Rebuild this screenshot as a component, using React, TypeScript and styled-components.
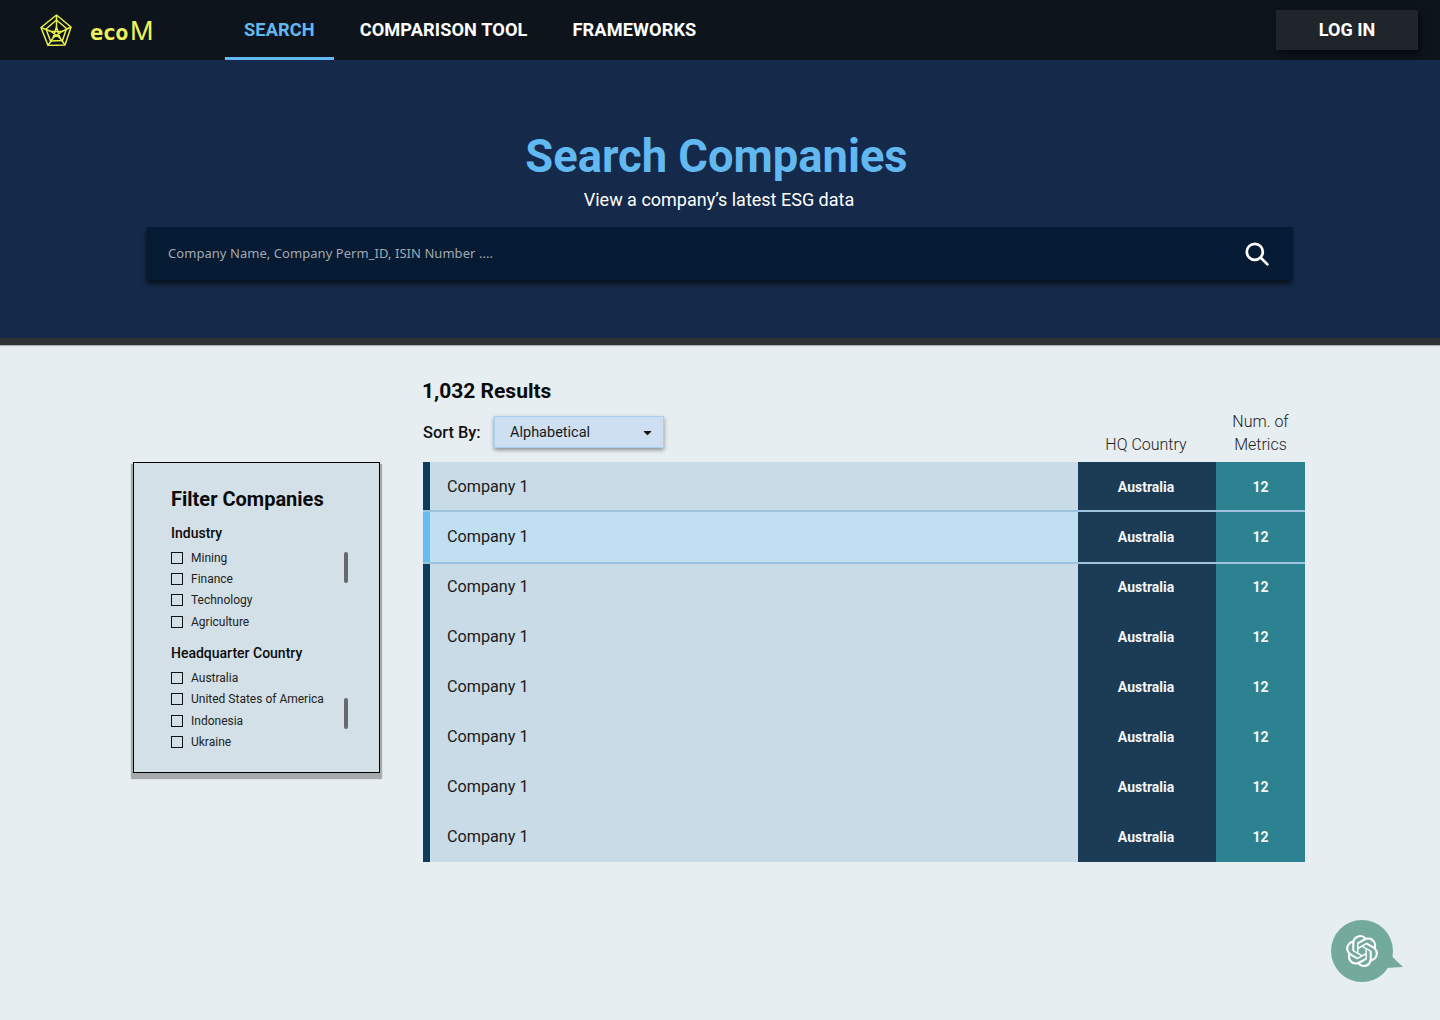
import styled, { createGlobalStyle } from 'styled-components';
import { FaCaretDown } from 'react-icons/fa';
import { SiOpenai } from 'react-icons/si';

const GlobalStyle = createGlobalStyle`
  html, body {
    margin: 0;
    padding: 0;
    background: #e6eef1;
    font-family: "Roboto", "Liberation Sans", sans-serif;
  }
  * { box-sizing: border-box; }
`;

const INDUSTRIES = ['Mining', 'Finance', 'Technology', 'Agriculture'];
const COUNTRIES = ['Australia', 'United States of America', 'Indonesia', 'Ukraine'];
const ROWS = [0, 1, 2, 3, 4, 5, 6, 7];

function Logo() {
  return (
    <svg width="32" height="32" viewBox="0 0 32 32" fill="none" stroke="#e8f04a" strokeWidth="1.5" strokeLinejoin="round">
      <polygon points="16.5,1 31,13 25,31 8,31.5 1,13.5" />
      <polygon points="16.5,6 26.5,14.5 22.5,26.5 10.5,27 6,15" />
      <polygon points="16.5,13 20,24 11,17.5 22,17.5 13,24" />
      <path d="M16.5 1V13M31 13L22 17.5M25 31L20 24M8 31.5L13 24M1 13.5L11 17.5" />
    </svg>
  );
}

function SearchIcon() {
  return (
    <svg width="24" height="24" viewBox="0 0 24 24" fill="none" stroke="#ffffff" strokeWidth="2.7" strokeLinecap="round">
      <circle cx="9.8" cy="9.8" r="8" />
      <line x1="15.8" y1="15.8" x2="22.4" y2="22.4" />
    </svg>
  );
}

function FilterGroup({ title, items, thumbTop }: { title: string; items: string[]; thumbTop: number }) {
  return (
    <Group>
      <GroupTitle>{title}</GroupTitle>
      {items.map((item) => (
        <CheckRow key={item}>
          <CheckBox />
          {item}
        </CheckRow>
      ))}
      <ScrollThumb $top={thumbTop} />
    </Group>
  );
}

function App() {
  return (
    <Page>
      <GlobalStyle />
      <Header>
        <Brand>
          <Logo />
          <BrandName>eco<BrandM>M</BrandM></BrandName>
        </Brand>
        <Nav>
          <NavTab $active>SEARCH</NavTab>
          <NavTab>COMPARISON TOOL</NavTab>
          <NavTab>FRAMEWORKS</NavTab>
        </Nav>
        <LoginButton>LOG IN</LoginButton>
      </Header>

      <Hero>
        <HeroTitle>Search Companies</HeroTitle>
        <HeroSub>View a company’s latest ESG data</HeroSub>
        <SearchBar>
          <Placeholder>Company Name, Company Perm_ID, ISIN Number ....</Placeholder>
          <SearchIcon />
        </SearchBar>
      </Hero>

      <Main>
        <Spacer />
        <ResultsHead>
          <ResultsTitle>1,032 Results</ResultsTitle>
          <Toolbar>
            <SortArea>
              <SortLabel>Sort By:</SortLabel>
              <SortSelect>
                Alphabetical
                <FaCaretDown size={13} color="#111" />
              </SortSelect>
            </SortArea>
            <ColumnLabel $shift={2}>HQ Country</ColumnLabel>
            <ColumnLabel>Num. of<br />Metrics</ColumnLabel>
          </Toolbar>
        </ResultsHead>

        <FilterPanel>
          <FilterTitle>Filter Companies</FilterTitle>
          <FilterGroup title="Industry" items={INDUSTRIES} thumbTop={29} />
          <FilterGroup title="Headquarter Country" items={COUNTRIES} thumbTop={55} />
        </FilterPanel>

        <Table>
          {ROWS.map((i) => (
            <Row key={i} $active={i === 1}>
              <RowBar $active={i === 1} />
              <CompanyCell $active={i === 1}>Company 1</CompanyCell>
              <CountryCell>Australia</CountryCell>
              <MetricCell>12</MetricCell>
            </Row>
          ))}
        </Table>
      </Main>

      <ChatBubble>
        <SiOpenai size={32} color="#ffffff" />
      </ChatBubble>
    </Page>
  );
}
export default App;

const Page = styled.div`
  position: relative;
  width: 1440px;
  height: 1020px;
  overflow: hidden;
  background: #e6eef1;
`;

const Header = styled.header`
  display: flex;
  align-items: stretch;
  height: 60px;
  padding: 0 22px 0 40px;
  background: #0d141c;
`;

const Brand = styled.div`
  display: flex;
  align-items: center;
  gap: 18px;
  width: 185px;
`;

const BrandName = styled.div`
  display: flex;
  align-items: baseline;
  font-family: "DejaVu Sans Mono", monospace;
  font-size: 22px;
  font-weight: 700;
  letter-spacing: -0.6px;
  color: #eef35a;
`;

const BrandM = styled.span`
  margin-left: 2px;
  font-family: "Inter", sans-serif;
  font-size: 26px;
  font-weight: 400;
  letter-spacing: 0;
`;

const Nav = styled.nav`
  display: flex;
  gap: 7px;
`;

const NavTab = styled.div<{ $active?: boolean }>`
  display: flex;
  align-items: center;
  height: 60px;
  padding: 1px 19px 0;
  font-size: 18.2px;
  font-weight: 700;
  letter-spacing: 0.1px;
  white-space: nowrap;
  color: ${(props) => (props.$active ? '#62b9f1' : '#ffffff')};
  border-bottom: 3px solid ${(props) => (props.$active ? '#62b9f1' : 'transparent')};
`;

const LoginButton = styled.button`
  align-self: center;
  width: 142px;
  height: 40px;
  margin-left: auto;
  padding: 0 0 2px;
  border: 0;
  background: #1f252b;
  box-shadow: 2px 3px 6px rgba(0, 0, 0, 0.6);
  color: #ffffff;
  font-family: inherit;
  font-size: 18px;
  font-weight: 700;
`;

const Hero = styled.section`
  display: flex;
  flex-direction: column;
  align-items: center;
  height: 285px;
  padding-top: 69px;
  background: #152a4a;
  border-bottom: 7px solid #303234;
  box-shadow: 0 1px 1px rgba(0, 0, 0, 0.25);
`;

const HeroTitle = styled.h1`
  margin: 0;
  padding-right: 7px;
  font-size: 45.3px;
  line-height: 56px;
  font-weight: 700;
  color: #62b9f1;
`;

const HeroSub = styled.div`
  margin-top: 1px;
  padding-right: 2px;
  font-size: 18px;
  line-height: 28px;
  color: #ffffff;
`;

const SearchBar = styled.div`
  display: flex;
  align-items: center;
  justify-content: space-between;
  width: 1146px;
  height: 53px;
  margin-top: 13px;
  padding: 0 24px 0 21px;
  background: #051a33;
  box-shadow: -1px 4px 5px rgba(0, 0, 0, 0.6);
`;

const Placeholder = styled.div`
  padding-bottom: 2px;
  font-family: "Noto Sans", sans-serif;
  font-size: 13px;
  letter-spacing: 0.05px;
  color: #a3a9b1;
`;

const Main = styled.main`
  display: grid;
  grid-template-columns: 247px 882px;
  column-gap: 43px;
  padding: 34px 0 0 133px;
`;

const Spacer = styled.div``;

const ResultsHead = styled.div`
  display: flex;
  flex-direction: column;
  height: 83px;
`;

const ResultsTitle = styled.div`
  margin-left: -1px;
  font-size: 21px;
  line-height: 24px;
  font-weight: 700;
  color: #0a0a0a;
`;

const Toolbar = styled.div`
  flex: 1;
  display: grid;
  grid-template-columns: 655px 138px 89px;
  align-items: end;
`;

const SortArea = styled.div`
  display: flex;
  align-items: center;
  gap: 13px;
  align-self: start;
  margin-top: 13px;
`;

const SortLabel = styled.div`
  width: 58px;
  font-size: 16.4px;
  font-weight: 500;
  white-space: nowrap;
  color: #111;
`;

const SortSelect = styled.div`
  display: flex;
  align-items: center;
  justify-content: space-between;
  width: 170px;
  height: 32px;
  padding: 0 9px 0 15px;
  background: #cddff0;
  border: 1px solid #a7d0ee;
  box-shadow: 0 2px 4px rgba(0, 0, 0, 0.4);
  font-size: 14.5px;
  color: #1a1a1a;
`;

const ColumnLabel = styled.div<{ $shift?: number }>`
  padding-bottom: 6px;
  padding-right: ${(props) => props.$shift || 0}px;
  text-align: center;
  font-size: 16px;
  line-height: 23px;
  font-weight: 300;
  color: #222;
`;

const FilterPanel = styled.aside`
  height: 311px;
  padding: 23px 0 0 37px;
  background: #d3e0e8;
  border: 1px solid #000;
  box-shadow: 0 4px 1px 2px #a6aaac;
`;

const FilterTitle = styled.div`
  font-size: 20px;
  line-height: 26px;
  font-weight: 700;
  color: #0a0a0a;
`;

const Group = styled.div`
  position: relative;
  margin-top: 11px;
`;

const GroupTitle = styled.div`
  margin-bottom: 4px;
  font-size: 14px;
  line-height: 20px;
  font-weight: 500;
  color: #0a0a0a;
`;

const CheckRow = styled.div`
  display: flex;
  align-items: center;
  gap: 8px;
  height: 21.33px;
  font-size: 12px;
  color: #222;
`;

const CheckBox = styled.span`
  width: 12px;
  height: 12px;
  border: 1px solid #111;
`;

const ScrollThumb = styled.div<{ $top: number }>`
  position: absolute;
  top: ${(props) => props.$top}px;
  left: 173px;
  width: 4px;
  height: 31px;
  border-radius: 2px;
  background: #666a6c;
`;

const Table = styled.div`
  display: flex;
  flex-direction: column;
`;

const Row = styled.div<{ $active?: boolean }>`
  position: relative;
  z-index: ${(props) => (props.$active ? 1 : 0)};
  display: grid;
  grid-template-columns: 7px 648px 138px 89px;
  height: ${(props) => (props.$active ? '54px' : '50px')};
  margin: ${(props) => (props.$active ? '-2px 0' : '0')};
  border-width: ${(props) => (props.$active ? '2px 0' : '0')};
  border-style: solid;
  border-color: #9cc2dd;
`;

const RowBar = styled.div<{ $active?: boolean }>`
  background: ${(props) => (props.$active ? '#64bcf3' : '#0d3d5c')};
`;

const CompanyCell = styled.div<{ $active?: boolean }>`
  display: flex;
  align-items: center;
  padding: 0 0 2px 17px;
  font-size: 16.2px;
  color: #1a1a1a;
  background: ${(props) => (props.$active ? '#c0dff2' : '#c8dbe6')};
`;

const CountryCell = styled.div`
  display: flex;
  align-items: center;
  justify-content: center;
  padding-right: 2px;
  font-size: 14px;
  font-weight: 700;
  color: #f4f7f9;
  background: #1c3b54;
`;

const MetricCell = styled(CountryCell)`
  padding-right: 0;
  background: #2c8290;
`;

const ChatBubble = styled.div`
  position: absolute;
  left: 1331px;
  top: 920px;
  display: flex;
  align-items: center;
  justify-content: center;
  width: 62px;
  height: 62px;
  border-radius: 50%;
  background: #74aa9c;
  &::after {
    content: "";
    position: absolute;
    left: 50px;
    top: 26px;
    width: 22px;
    height: 22px;
    background: #74aa9c;
    clip-path: polygon(0 0, 100% 95%, 20% 100%);
  }
`;
